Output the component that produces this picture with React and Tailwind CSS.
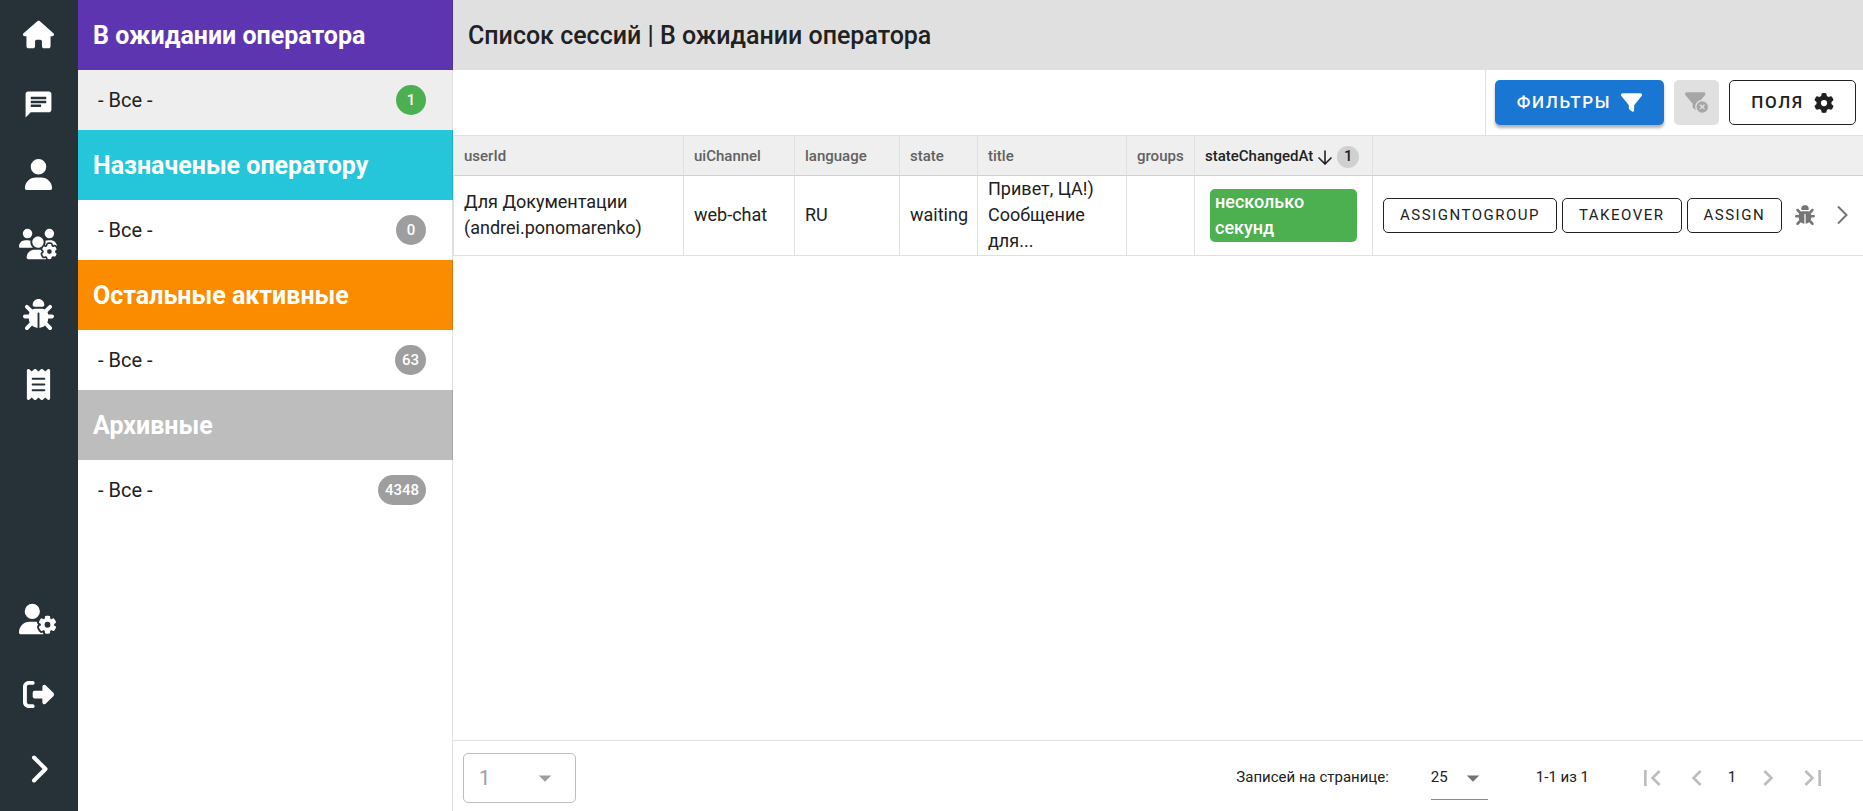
import React from "react";
import {
  FaHouse,
  FaUser,
  FaUsersGear,
  FaBug,
  FaReceipt,
  FaUserGear,
  FaRightFromBracket,
  FaFilter,
  FaFilterCircleXmark,
  FaGear,
} from "react-icons/fa6";
import {
  MdChat,
  MdArrowDropDown,
  MdFirstPage,
  MdLastPage,
  MdChevronLeft,
  MdChevronRight,
} from "react-icons/md";

function RailButton({ label, children }) {
  return (
    <button
      type="button"
      aria-label={label}
      className="flex h-[70px] w-full items-center justify-center pr-[2px] pb-[2px] text-white"
    >
      {children}
    </button>
  );
}

function Rail() {
  return (
    <nav className="flex w-[78px] shrink-0 flex-col justify-between bg-[#263238] pb-[6px]">
      <div className="flex flex-col">
        <RailButton label="Главная"><FaHouse size={31} /></RailButton>
        <RailButton label="Сессии"><MdChat size={31} /></RailButton>
        <RailButton label="Пользователи"><FaUser size={31} /></RailButton>
        <RailButton label="Группы"><FaUsersGear size={38} /></RailButton>
        <RailButton label="Отладка"><FaBug size={31} /></RailButton>
        <RailButton label="Журнал"><FaReceipt size={31} /></RailButton>
      </div>
      <div className="flex flex-col gap-[5px]">
        <RailButton label="Профиль"><FaUserGear size={38} /></RailButton>
        <RailButton label="Выход"><FaRightFromBracket size={31} /></RailButton>
        <RailButton label="Развернуть">
          <svg className="ml-[2px]" width="18" height="30" viewBox="0 0 18 30" fill="none" stroke="currentColor" strokeWidth="4" strokeLinecap="round" strokeLinejoin="round">
            <path d="M4 3.500L15.500 15L4 26.500" />
          </svg>
        </RailButton>
      </div>
    </nav>
  );
}

const GROUPS = [
  { title: "В ожидании оператора", count: 1, head: "bg-[#5e35b1]", row: "bg-[#eeeeee]", badge: "bg-[#4caf50]" },
  { title: "Назначеные оператору", count: 0, head: "bg-[#26c6da]", row: "bg-white", badge: "bg-[#9e9e9e]" },
  { title: "Остальные активные", count: 63, head: "bg-[#fb8c00]", row: "bg-white", badge: "bg-[#9e9e9e]" },
  { title: "Архивные", count: 4348, head: "bg-[#bdbdbd]", row: "bg-white", badge: "bg-[#9e9e9e]" },
];

function GroupPanel() {
  return (
    <aside className="w-[375px] shrink-0 border-r border-[#e0e0e0] bg-white">
      {GROUPS.map((g) => (
        <section key={g.title}>
          <h2 className={`-mr-px flex h-[70px] items-center border-r border-black/12 px-[15px] pt-[2px] text-[25px] font-bold text-white ${g.head}`}>
            {g.title}
          </h2>
          <a href="#all" className={`flex h-[60px] items-center justify-between pr-[26px] pl-5 text-[20px] text-[#212121] ${g.row}`}>
            <span>- Все -</span>
            <span className={`flex h-[30px] min-w-[30px] items-center justify-center rounded-full px-[7px] text-[15px] font-medium text-white ${g.badge}`}>
              {g.count}
            </span>
          </a>
        </section>
      ))}
    </aside>
  );
}

function Toolbar() {
  return (
    <div className="flex h-[66px] justify-end border-b border-[#e0e0e0]">
      <div className="flex items-center gap-[10px] border-l border-[#e0e0e0] pr-[7px] pl-[9px]">
        <button type="button" className="flex h-[45px] items-center gap-[10px] rounded-[5px] bg-[#1976d2] px-[22px] text-[17px] font-medium tracking-widest text-white shadow-[0_3px_3px_rgba(0,0,0,0.3)]">
          ФИЛЬТРЫ
          <FaFilter size={21} />
        </button>
        <button type="button" disabled aria-label="Сбросить фильтры" className="flex size-[45px] items-center justify-center rounded-[5px] bg-[#e0e0e0] text-[#a6a6a6]">
          <FaFilterCircleXmark size={23} />
        </button>
        <button type="button" className="flex h-[45px] items-center gap-[10px] rounded-[5px] border border-[#212121] px-[21px] text-[17px] font-medium tracking-widest text-[#212121]">
          ПОЛЯ
          <FaGear size={20} />
        </button>
      </div>
    </div>
  );
}

function ActionButton({ children }) {
  return (
    <button type="button" className="h-[35px] rounded-[5px] border border-[#212121] px-4 text-[15px] tracking-widest text-[#212121]">
      {children}
    </button>
  );
}

const HEAD = "border-r border-[#e0e0e0] border-b border-b-[#d0d0d0] px-[10px] pt-[2px] text-left text-[15px] font-medium text-[#616161]";
const CELL = "border-r border-b border-[#e0e0e0] px-[10px] pb-px text-[18px] leading-[26px]";

function SessionTable() {
  return (
    <table className="w-full table-fixed border-separate border-spacing-0 border-l border-[#e0e0e0]">
      <colgroup>
        <col className="w-[230px]" />
        <col className="w-[111px]" />
        <col className="w-[105px]" />
        <col className="w-[78px]" />
        <col className="w-[149px]" />
        <col className="w-[68px]" />
        <col className="w-[178px]" />
        <col />
      </colgroup>
      <thead>
        <tr className="h-10 bg-[#efefef]">
          <th className={HEAD}>userId</th>
          <th className={HEAD}>uiChannel</th>
          <th className={HEAD}>language</th>
          <th className={HEAD}>state</th>
          <th className={HEAD}>title</th>
          <th className={HEAD}>groups</th>
          <th className={HEAD}>
            <button type="button" className="flex items-center gap-1 text-[#212121]">
              stateChangedAt
              <svg width="16" height="16" viewBox="0 0 16 16" fill="none" stroke="currentColor" strokeWidth="1.600">
                <path d="M8 1.500V14.500M1.500 8.500L8 15L14.500 8.500" />
              </svg>
              <span className="flex size-[22px] items-center justify-center rounded-full bg-[#d0d0d0]">1</span>
            </button>
          </th>
          <th className="border-b border-[#d0d0d0]" aria-label="Действия" />
        </tr>
      </thead>
      <tbody className="text-[#212121]">
        <tr className="h-20">
          <td className={CELL}>Для Документации (andrei.ponomarenko)</td>
          <td className={CELL}>web-chat</td>
          <td className={CELL}>RU</td>
          <td className={CELL}>waiting</td>
          <td className={CELL}>Привет, ЦА!) Сообщение для...</td>
          <td className={CELL} />
          <td className={CELL}>
            <div className="mx-[5px] rounded-[5px] bg-[#4caf50] px-[5px] pb-px font-medium text-white">
              несколько секунд
            </div>
          </td>
          <td className="border-b border-[#e0e0e0] pb-px pl-[10px]">
            <div className="flex items-center gap-[5px]">
              <ActionButton>ASSIGNTOGROUP</ActionButton>
              <ActionButton>TAKEOVER</ActionButton>
              <ActionButton>ASSIGN</ActionButton>
              <button type="button" aria-label="Отладка" className="flex size-[35px] items-center justify-center text-[#757575]">
                <FaBug size={20} />
              </button>
              <button type="button" aria-label="Открыть" className="flex size-[30px] items-center justify-center text-[#757575]">
                <svg width="12" height="20" viewBox="0 0 12 20" fill="none" stroke="currentColor" strokeWidth="2">
                  <path d="M2 1.500L10.500 10L2 18.500" />
                </svg>
              </button>
            </div>
          </td>
        </tr>
      </tbody>
    </table>
  );
}

const PAGE_BTN = "flex size-[45px] items-center justify-center text-[#bdbdbd]";

function Footer() {
  return (
    <footer className="flex h-[71px] items-center justify-between border-t border-[#e0e0e0] pt-[3px] pr-7 pl-[10px] text-[15px] text-[#212121]">
      <div className="relative">
        <select disabled aria-label="Страница" className="h-[50px] w-[113px] appearance-none rounded-[5px] border border-[#bdbdbd] bg-white px-[15px] text-[20px] text-[#9e9e9e] opacity-100">
          <option>1</option>
        </select>
        <MdArrowDropDown size={30} className="pointer-events-none absolute top-[10px] right-4 text-[#9e9e9e]" />
      </div>
      <div className="flex items-center">
        <label htmlFor="page-size" className="mr-[42px]">Записей на странице:</label>
        <div className="relative mr-12">
          <select id="page-size" defaultValue="25" className="h-[45px] w-[57px] appearance-none border-b border-[#8c8c8c] bg-white pt-px">
            <option>25</option>
          </select>
          <MdArrowDropDown size={30} className="pointer-events-none absolute top-2 right-0 text-[#757575]" />
        </div>
        <span className="mr-10">1-1 из 1</span>
        <button type="button" aria-label="Первая" disabled className={PAGE_BTN}><MdFirstPage size={32} /></button>
        <button type="button" aria-label="Предыдущая" disabled className={PAGE_BTN}><MdChevronLeft size={32} /></button>
        <span className="w-[26px] text-center">1</span>
        <button type="button" aria-label="Следующая" disabled className={PAGE_BTN}><MdChevronRight size={32} /></button>
        <button type="button" aria-label="Последняя" disabled className={PAGE_BTN}><MdLastPage size={32} /></button>
      </div>
    </footer>
  );
}

export default function App() {
  return (
    <div className="flex min-h-screen bg-white font-['Roboto',sans-serif]">
      <Rail />
      <GroupPanel />
      <main className="flex min-w-0 flex-1 flex-col">
        <h1 className="flex h-[70px] shrink-0 items-center bg-[#e0e0e0] px-[15px] pt-[2px] text-[25px] font-medium text-[#212121]">
          Список сессий | В ожидании оператора
        </h1>
        <Toolbar />
        <div className="flex-1">
          <SessionTable />
        </div>
        <Footer />
      </main>
    </div>
  );
}
